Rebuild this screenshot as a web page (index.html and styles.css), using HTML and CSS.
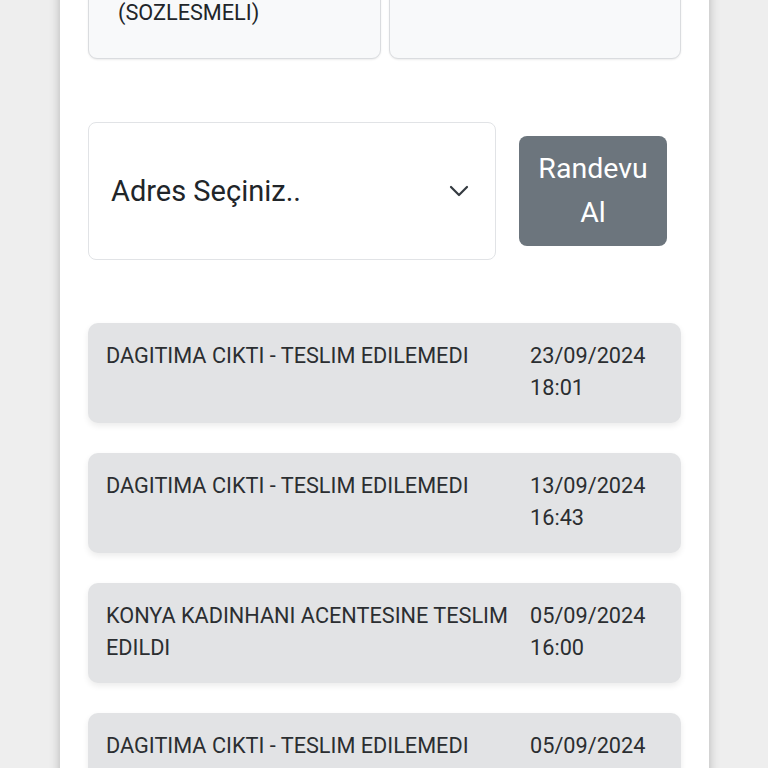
FILE: index.html
```html
<!DOCTYPE html>
<html lang="tr">
<head>
<meta charset="utf-8">
<link rel="stylesheet" href="styles.css">
</head>
<body>
<div class="panel">
  <div class="cards">
    <div class="card"><span class="card-text">(SOZLESMELI)</span></div>
    <div class="card"></div>
  </div>
  <div class="actions">
    <div class="select">
      <span>Adres Seçiniz..</span>
      <svg class="chev" width="20" height="12" viewBox="0 0 20 12"><path d="M2 2 L10 10 L18 2" fill="none" stroke="#343a40" stroke-width="2.2" stroke-linecap="round" stroke-linejoin="round"/></svg>
    </div>
    <button class="btn">Randevu<br>Al</button>
  </div>
  <div class="list">
    <div class="item"><div class="desc">DAGITIMA CIKTI - TESLIM EDILEMEDI</div><div class="date">23/09/2024<br>18:01</div></div>
    <div class="item"><div class="desc">DAGITIMA CIKTI - TESLIM EDILEMEDI</div><div class="date">13/09/2024<br>16:43</div></div>
    <div class="item"><div class="desc">KONYA KADINHANI ACENTESINE TESLIM EDILDI</div><div class="date">05/09/2024<br>16:00</div></div>
    <div class="item"><div class="desc">DAGITIMA CIKTI - TESLIM EDILEMEDI</div><div class="date">05/09/2024<br>15:12</div></div>
  </div>
</div>
</body>
</html>
```
FILE: styles.css
```css
html, body {
  margin: 0;
  padding: 0;
  background: #eeeeee;
  font-family: Roboto, "Noto Sans", sans-serif;
  color: #212529;
  height: 768px;
  overflow: hidden;
}
.panel {
  width: 593px;
  margin: -57px 0 0 60px;
  padding: 0 28px;
  background: #ffffff;
  box-shadow: 0 0 10px rgba(0,0,0,0.25);
  min-height: 900px;
}
.cards {
  display: flex;
  gap: 8px;
}
.card {
  flex: 1;
  height: 116px;
  background: #f8f9fa;
  border: 1px solid #dadcdf;
  border-radius: 9px;
  box-shadow: 0 1px 2px rgba(0,0,0,0.08);
  display: flex;
  align-items: flex-end;
  padding: 0 0 32px 29px;
  box-sizing: border-box;
  font-size: 21.7px;
  line-height: 26px;
}
.actions {
  display: flex;
  align-items: center;
  gap: 23px;
  margin-top: 63px;
}
.select {
  width: 408px;
  height: 138px;
  box-sizing: border-box;
  border: 1px solid #e1e3e6;
  border-radius: 8px;
  display: flex;
  align-items: center;
  justify-content: space-between;
  padding: 0 26px 0 22px;
  font-size: 29px;
  color: #212529;
}
.btn {
  width: 148px;
  height: 110px;
  background: #6c757d;
  border: none;
  border-radius: 8px;
  color: #ffffff;
  font-family: Roboto, "Noto Sans", sans-serif;
  font-size: 28.5px;
  line-height: 44px;
  padding: 0;
}
.list {
  display: flex;
  flex-direction: column;
  gap: 30px;
  margin-top: 63px;
}
.item {
  height: 100px;
  box-sizing: border-box;
  background: #e2e3e5;
  border-radius: 10px;
  box-shadow: 0 3px 6px rgba(0,0,0,0.08);
  display: flex;
  padding: 17px 18px;
  font-size: 21.7px;
  line-height: 32px;
  color: #2b2e31;
}
.desc {
  flex: 1;
  padding-right: 12px;
}
.date {
  width: 133px;
}
```
